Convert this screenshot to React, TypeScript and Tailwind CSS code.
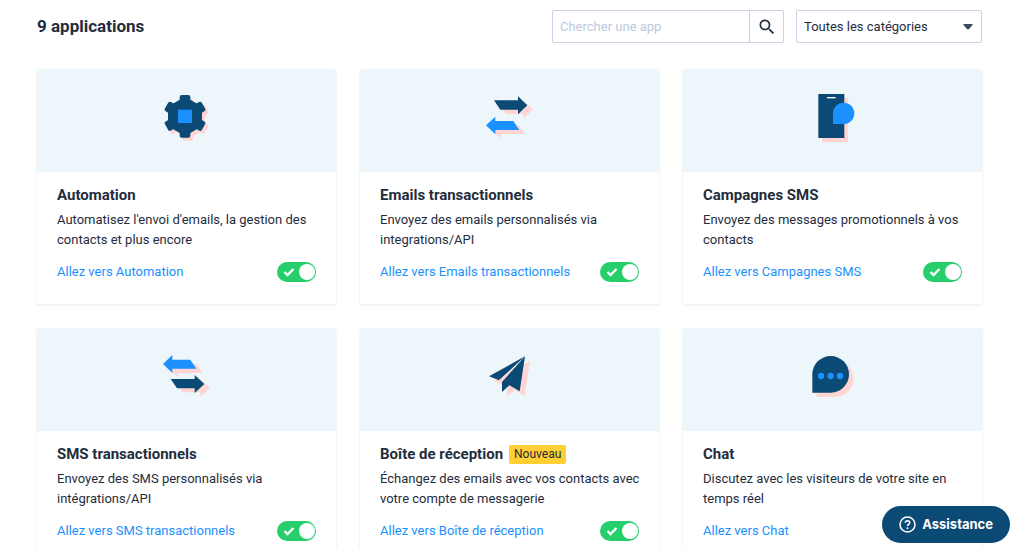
import type { ReactNode } from 'react';
import { MdSearch } from 'react-icons/md';

const NAVY = '#0b4a75';
const BLUE = '#1a91ff';
const PINK = '#ffd5d3';

function Icon({ viewBox, children }: { viewBox: string; children: ReactNode }) {
  return (
    <svg viewBox={viewBox} className="w-[63px] h-[63px]" aria-hidden="true">
      {children}
    </svg>
  );
}

function GearShape() {
  return (
    <>
      <polygon points="105,35 156,64.5 156,123.5 105,153 54,123.5 54,64.5" />
      <rect x="89" y="30" width="32" height="128" rx="6" />
      <rect x="89" y="30" width="32" height="128" rx="6" transform="rotate(60 105 94)" />
      <rect x="89" y="30" width="32" height="128" rx="6" transform="rotate(120 105 94)" />
    </>
  );
}

const gearIcon = (
  <Icon viewBox="15 12 189 189">
    <g fill={PINK} transform="translate(9 9)">
      <GearShape />
    </g>
    <g fill={NAVY}>
      <GearShape />
    </g>
    <rect x="84" y="74" width="42" height="40" fill={BLUE} />
  </Icon>
);

const emailArrowsIcon = (
  <Icon viewBox="12 12 189 189">
    <path d="M78 59H148V47L177 73L148 101V87H95Z" fill={PINK} />
    <path d="M60 46H132V34L160 61L132 88V74H79Z" fill={NAVY} />
    <path d="M52 134L80 108V121H134L153 147H80V160Z" fill={PINK} />
    <path d="M36 121L64 95V108H118L136 135H64V148Z" fill={BLUE} />
  </Icon>
);

const smsArrowsIcon = (
  <Icon viewBox="15 12 189 189">
    <path d="M56 73L84 47V60H138L157 87H84V100Z" fill={PINK} />
    <path d="M39 60L67 33V47H121L139 74H67V87Z" fill={BLUE} />
    <path d="M79 118H151V106L180 132L151 160V145H97Z" fill={PINK} />
    <path d="M62 105H134V93L163 120L134 147V133H81Z" fill={NAVY} />
  </Icon>
);

const phoneIcon = (
  <Icon viewBox="3 12 189 189">
    <rect x="66" y="39" width="78" height="132" fill={PINK} />
    <rect x="55" y="27" width="78" height="132" fill={NAVY} />
    <rect x="81" y="36" width="26" height="4" fill="#fff" />
    <path d="M99 117V85A32 32 0 1 1 131 117Z" fill={BLUE} />
  </Icon>
);

const planeIcon = (
  <Icon viewBox="12 12 189 189">
    <g fill={PINK} transform="translate(15 14)">
      <path d="M153 37L45 97L75 109L135 56L84 114V144L106 124L137 142Z" />
    </g>
    <path d="M153 37L45 97L75 109Z" fill={NAVY} />
    <path d="M75 109L135 56L84 114Z" fill={PINK} />
    <path d="M153 37L84 114V144L106 124L137 142Z" fill={NAVY} />
  </Icon>
);

const chatIcon = (
  <Icon viewBox="15 12 189 189">
    <path d="M62 159V104A55 55 0 1 1 117 159Z" fill={PINK} />
    <path d="M49 146V91A55 55 0 1 1 104 146Z" fill={NAVY} />
    <g fill={BLUE}>
      <circle cx="75" cy="96" r="9.5" />
      <circle cx="104" cy="96" r="9.5" />
      <circle cx="132" cy="96" r="9.5" />
    </g>
  </Icon>
);

type App = {
  name: string;
  description: string;
  icon: ReactNode;
  isNew?: boolean;
  noToggle?: boolean;
};

const apps: App[] = [
  {
    name: 'Automation',
    description: "Automatisez l'envoi d'emails, la gestion des contacts et plus encore",
    icon: gearIcon,
  },
  {
    name: 'Emails transactionnels',
    description: 'Envoyez des emails personnalisés via integrations/API',
    icon: emailArrowsIcon,
  },
  {
    name: 'Campagnes SMS',
    description: 'Envoyez des messages promotionnels à vos contacts',
    icon: phoneIcon,
  },
  {
    name: 'SMS transactionnels',
    description: 'Envoyez des SMS personnalisés via intégrations/API',
    icon: smsArrowsIcon,
  },
  {
    name: 'Boîte de réception',
    description: 'Échangez des emails avec vos contacts avec votre compte de messagerie',
    icon: planeIcon,
    isNew: true,
  },
  {
    name: 'Chat',
    description: 'Discutez avec les visiteurs de votre site en temps réel',
    icon: chatIcon,
    noToggle: true,
  },
];

function Toggle({ label }: { label: string }) {
  return (
    <label className="relative block w-[39px] h-5 cursor-pointer">
      <input
        type="checkbox"
        defaultChecked
        aria-label={label}
        className="peer appearance-none block w-full h-full rounded-full bg-gray-300 checked:bg-[#27cf6c] cursor-pointer"
      />
      <svg
        viewBox="0 0 12 10"
        className="absolute left-1.5 top-[5px] w-3 h-2.5 pointer-events-none"
        aria-hidden="true"
      >
        <path d="M1.5 5L4.5 8L10.5 2" fill="none" stroke="#fff" strokeWidth="2.4" />
      </svg>
      <span className="absolute left-0.5 peer-checked:left-auto peer-checked:right-px top-0.5 w-4 h-4 rounded-full bg-white pointer-events-none" />
    </label>
  );
}

function AppCard({ app }: { app: App }) {
  return (
    <article className="rounded-xs bg-white shadow-[0_1px_2px_1px_rgba(0,0,0,0.05)]">
      <div className="h-[103px] rounded-t-xs bg-[#edf6fb] flex items-center justify-center">
        {app.icon}
      </div>
      <div className="pl-5 pr-4 pt-3 pb-[22px]">
        <div className="flex items-center gap-1.5">
          <h2 className="text-[15px] leading-[22px] font-bold">{app.name}</h2>
          {app.isNew && (
            <span className="rounded-xs bg-[#ffcf33] px-[5px] text-xs leading-[19px]">Nouveau</span>
          )}
        </div>
        <p className="mt-1 text-[13px] leading-5">{app.description}</p>
        <div className="mt-3 mr-1 h-5 flex items-center justify-between">
          <a href="#" className="text-[13px] leading-5 text-[#1a91ff] hover:underline">
            Allez vers {app.name}
          </a>
          {!app.noToggle && <Toggle label={app.name} />}
        </div>
      </div>
    </article>
  );
}

export default function App() {
  return (
    <div className="min-h-screen bg-white pl-[37px] pr-[42px] pt-2.5 pb-6 font-[Roboto,sans-serif] text-[#1f2d3d]">
      <header className="flex items-start justify-between mb-[26px]">
        <h1 className="text-[17px] leading-8 font-bold">9 applications</h1>
        <div className="flex gap-3">
          <form className="flex w-[232px] h-[33px] rounded-xs border border-[#c8d3e4]">
            <input
              type="text"
              aria-label="Chercher une app"
              placeholder="Chercher une app"
              className="flex-1 min-w-0 px-[7px] text-[13px] placeholder:text-[#bcc9dc] outline-none"
            />
            <button
              type="button"
              aria-label="Chercher"
              className="w-[34px] border-l border-[#c8d3e4] flex items-center justify-center"
            >
              <MdSearch className="w-5 h-5" />
            </button>
          </form>
          <div className="relative">
            <select
              aria-label="Catégorie"
              className="appearance-none w-[186px] h-[33px] rounded-xs border border-[#c8d3e4] bg-white pl-[7px] pr-7 text-[13px] outline-none"
            >
              <option>Toutes les catégories</option>
            </select>
            <svg
              viewBox="0 0 10 6"
              className="absolute right-[9px] top-[14px] w-2.5 h-1.5 pointer-events-none"
              aria-hidden="true"
            >
              <path d="M1 0H9Q10 0 9.5 1L6 5Q5 6 4 5L0.5 1Q0 0 1 0Z" fill="#3b4a5c" />
            </svg>
          </div>
        </div>
      </header>

      <main className="grid grid-cols-3 gap-6">
        {apps.map((app) => (
          <AppCard key={app.name} app={app} />
        ))}
      </main>

      {/* Floating help button */}
      <button
        type="button"
        className="fixed right-3.5 bottom-[5px] h-[37px] px-[17px] rounded-full bg-[#0b4a75] text-white flex items-center gap-1.5 font-[Inter,sans-serif] text-[13px] font-bold"
      >
        <svg viewBox="0 0 17 17" className="w-[17px] h-[17px]" fill="none" stroke="#fff" aria-hidden="true">
          <circle cx="8.5" cy="8.5" r="7.5" strokeWidth="1.5" />
          <path d="M6.3 6.8C6.3 4 10.7 4 10.7 6.8C10.7 8.3 8.5 8.4 8.5 10" strokeWidth="1.6" />
          <circle cx="8.5" cy="12.2" r="1" fill="#fff" stroke="none" />
        </svg>
        Assistance
      </button>
    </div>
  );
}
